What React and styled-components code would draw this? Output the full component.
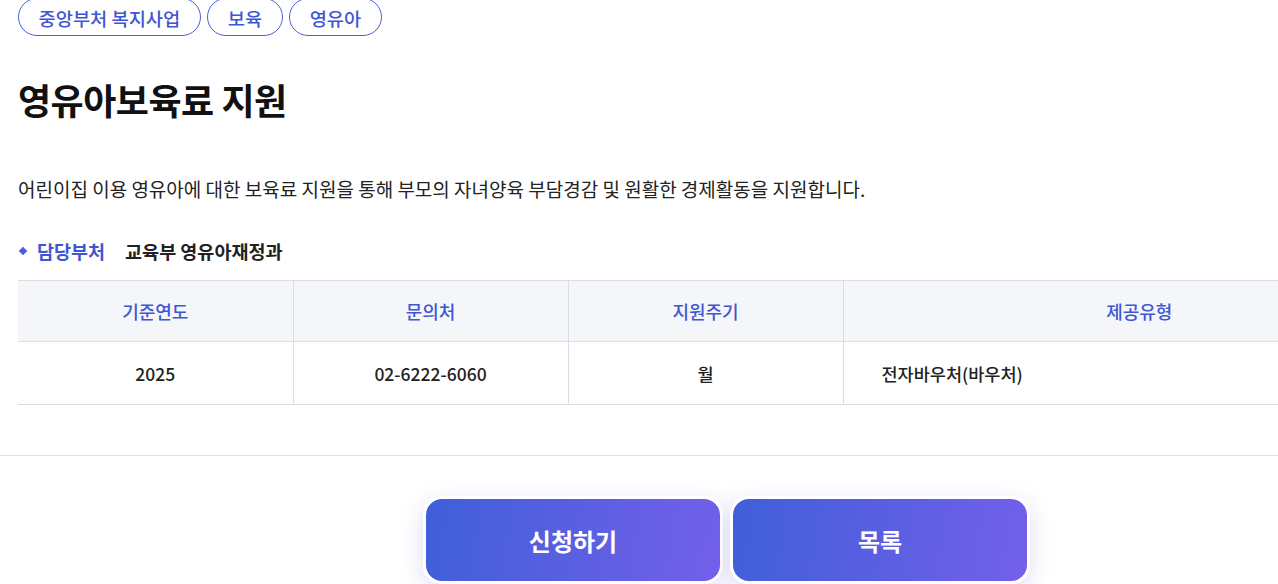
import React from "react";
import styled, { createGlobalStyle } from "styled-components";

const Global = createGlobalStyle`
  html, body { margin: 0; padding: 0; background: #fff; overflow: hidden; }
  body { font-family: "Noto Sans CJK KR", "Noto Sans", sans-serif; color: #222; }
  * { box-sizing: border-box; }
`;

const Page = styled.div`
  width: 1453px;
  margin-top: -2px;
`;

const Inner = styled.div`
  padding: 0 18px;
`;

const TagRow = styled.div`
  display: flex;
  gap: 6.5px;
`;

const Tag = styled.span`
  display: inline-flex;
  align-items: center;
  height: 38px;
  padding: 0 19.5px;
  border: 1px solid #4a61d9;
  border-radius: 19px;
  color: #3f56d3;
  font-size: 18.7px;
  font-weight: 500;
`;

const Title = styled.h1`
  margin: 38px 0 0;
  font-size: 36px;
  line-height: 50px;
  font-weight: 700;
  letter-spacing: -0.5px;
  color: #111;
`;

const Desc = styled.p`
  margin: 51px 0 0;
  font-size: 19px;
  line-height: 28px;
  color: #222;
`;

const Dept = styled.div`
  display: flex;
  align-items: center;
  margin-top: 34px;
  height: 28px;
  font-size: 18.5px;
  font-weight: 700;
`;

const Diamond = styled.span`
  width: 6px;
  height: 6px;
  background: #4a5ee0;
  transform: rotate(45deg);
  margin: 0 11px 0 2px;
`;

const DeptLabel = styled.span`
  color: #3f56d3;
  margin-right: 20px;
`;

const DeptValue = styled.span`
  color: #222;
  font-weight: 600;
`;

const Table = styled.table`
  margin-top: 15px;
  width: 1417px;
  border-collapse: collapse;
  table-layout: fixed;
  border-top: 1px solid #dcdde2;
`;

const Th = styled.th`
  height: 61px;
  background: #f5f6fa;
  color: #3f56d3;
  font-size: 18px;
  font-weight: 500;
  text-align: center;
  border-bottom: 1px solid #dcdde2;
  border-left: ${(p) => (p.$first ? "none" : "1px solid #dcdde2")};
`;

const Td = styled.td`
  height: 63px;
  color: #222;
  font-size: 17.5px;
  font-weight: 500;
  text-align: ${(p) => (p.$left ? "left" : "center")};
  padding: ${(p) => (p.$left ? "0 38px" : "0")};
  border-bottom: 1px solid #dcdde2;
  border-left: ${(p) => (p.$first ? "none" : "1px solid #dcdde2")};
`;

const Divider = styled.hr`
  margin: 50px 0 0;
  border: 0;
  border-top: 1px solid #e2e2e6;
`;

const Buttons = styled.div`
  display: flex;
  justify-content: center;
  gap: 7px;
  margin-top: 40px;
`;

const Btn = styled.button`
  width: 300px;
  height: 88px;
  border: 3px solid #fff;
  border-radius: 19px;
  background: linear-gradient(100deg, #3f5fd8 0%, #5a5fe2 50%, #7360ea 100%);
  box-shadow: 0 6px 22px rgba(110, 100, 220, 0.22);
  color: #fff;
  font-family: inherit;
  font-size: 24px;
  font-weight: 700;
  padding: 0;
  cursor: pointer;
`;

const cols = [275, 275, 275, 592];

export default function App() {
  return (
    <>
      <Global />
      <Page>
        <Inner>
          <TagRow>
            <Tag>중앙부처 복지사업</Tag>
            <Tag>보육</Tag>
            <Tag>영유아</Tag>
          </TagRow>
          <Title>영유아보육료 지원</Title>
          <Desc>
            어린이집 이용 영유아에 대한 보육료 지원을 통해 부모의 자녀양육 부담경감 및 원활한 경제활동을 지원합니다.
          </Desc>
          <Dept>
            <Diamond />
            <DeptLabel>담당부처</DeptLabel>
            <DeptValue>교육부 영유아재정과</DeptValue>
          </Dept>
          <Table>
            <colgroup>
              {cols.map((w, i) => (
                <col key={i} style={{ width: w }} />
              ))}
            </colgroup>
            <thead>
              <tr>
                <Th $first>기준연도</Th>
                <Th>문의처</Th>
                <Th>지원주기</Th>
                <Th>제공유형</Th>
              </tr>
            </thead>
            <tbody>
              <tr>
                <Td $first>2025</Td>
                <Td>02-6222-6060</Td>
                <Td>월</Td>
                <Td $left>전자바우처(바우처)</Td>
              </tr>
            </tbody>
          </Table>
        </Inner>
        <Divider />
        <Buttons>
          <Btn>신청하기</Btn>
          <Btn>목록</Btn>
        </Buttons>
      </Page>
    </>
  );
}
